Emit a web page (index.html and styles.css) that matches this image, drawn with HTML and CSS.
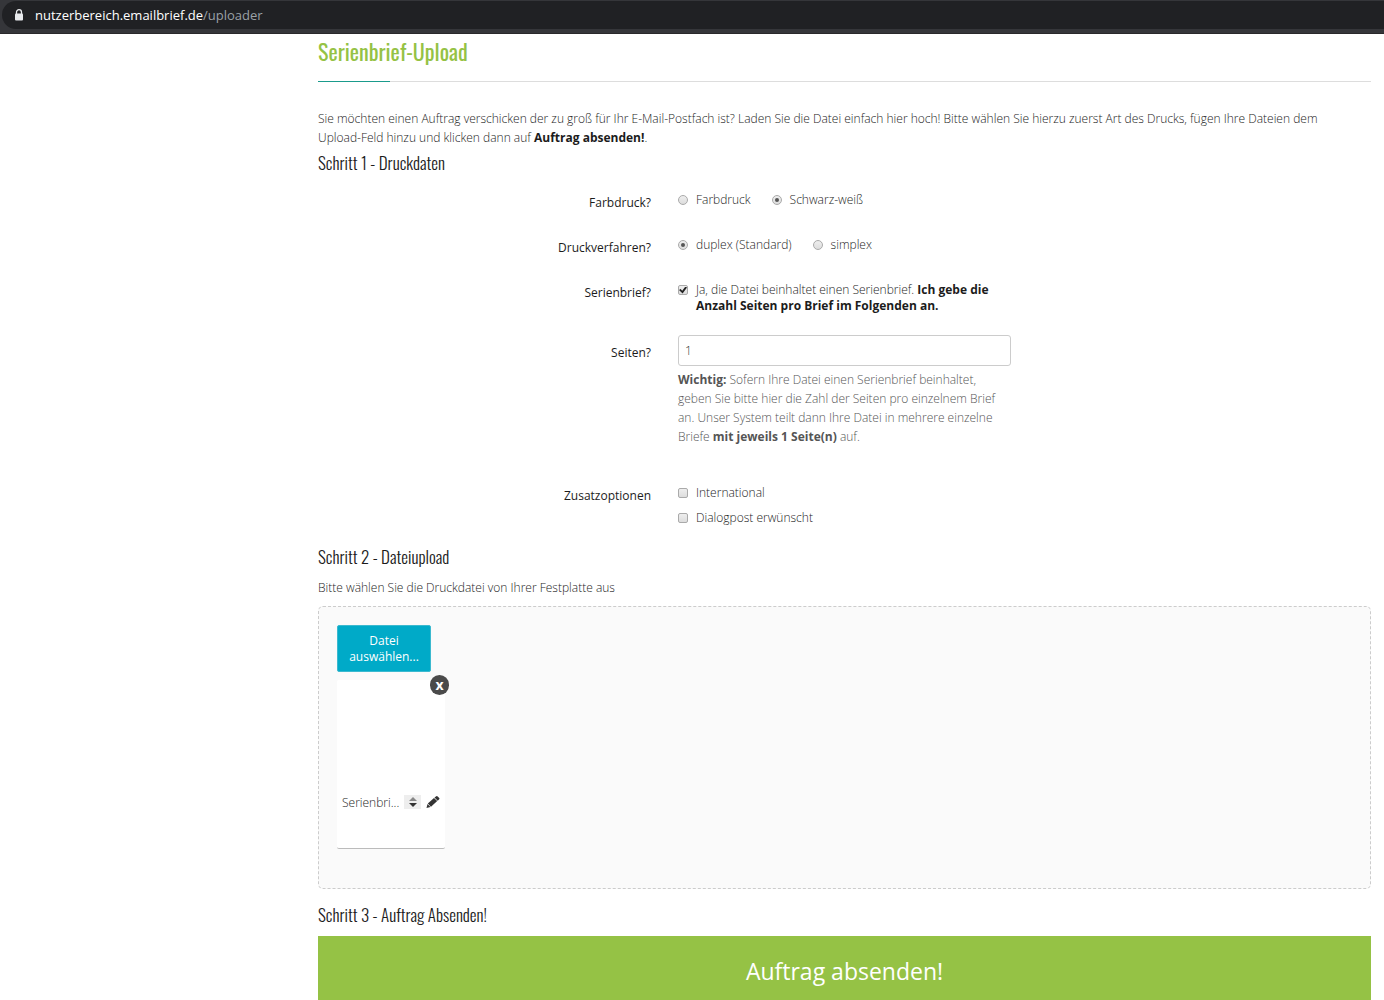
FILE: index.html
```html
<!DOCTYPE html>
<html lang="de">
<head>
<meta charset="utf-8">
<meta name="viewport" content="width=device-width, initial-scale=1">
<title>Serienbrief-Upload</title>
<link rel="stylesheet" href="styles.css">
</head>
<body>
<header class="browser-bar">
  <div class="address">
    <svg class="lock" width="10" height="12" viewBox="0 0 10 12" aria-hidden="true"><path d="M2.5 5V3.2a2.5 2.5 0 0 1 5 0V5" fill="none" stroke="#e8eaed" stroke-width="1.3"/><rect x="1" y="4.5" width="8" height="7" rx="1" fill="#e8eaed"/></svg>
    <span class="host">nutzerbereich.emailbrief.de<span class="path">/uploader</span></span>
  </div>
</header>
<main class="content">
  <h1 class="title">Serienbrief-Upload</h1>
  <p class="intro">Sie möchten einen Auftrag verschicken der zu groß für Ihr E-Mail-Postfach ist? Laden Sie die Datei einfach hier hoch! Bitte wählen Sie hierzu zuerst Art des Drucks, fügen Ihre Dateien dem <span class="nowrap">Upload-Feld</span> hinzu und klicken dann auf <b>Auftrag absenden!</b>.</p>
  <form class="form">
    <h2 class="step">Schritt 1 - Druckdaten</h2>
    <div class="row" role="radiogroup" aria-labelledby="l-farbe">
      <span class="label" id="l-farbe">Farbdruck?</span>
      <div class="options">
        <label class="option"><input class="tick radio" type="radio" name="farbe">Farbdruck</label>
        <label class="option"><input class="tick radio" type="radio" name="farbe" checked>Schwarz-weiß</label>
      </div>
    </div>
    <div class="row" role="radiogroup" aria-labelledby="l-verfahren">
      <span class="label" id="l-verfahren">Druckverfahren?</span>
      <div class="options">
        <label class="option"><input class="tick radio" type="radio" name="verfahren" checked>duplex (Standard)</label>
        <label class="option"><input class="tick radio" type="radio" name="verfahren">simplex</label>
      </div>
    </div>
    <div class="row">
      <span class="label">Serienbrief?</span>
      <label class="option"><input class="tick check" type="checkbox" checked><span>Ja, die Datei beinhaltet einen Serienbrief. <b>Ich gebe die Anzahl Seiten pro Brief im Folgenden an.</b></span></label>
    </div>
    <div class="row row-pages">
      <label class="label" for="seiten">Seiten?</label>
      <div>
        <input class="text" id="seiten" type="text" value="1">
        <p class="help"><b>Wichtig:</b> Sofern Ihre Datei einen Serienbrief beinhaltet, geben Sie bitte hier die Zahl der Seiten pro einzelnem Brief an. Unser System teilt dann Ihre Datei in mehrere einzelne Briefe <b>mit jeweils 1 Seite(n)</b> auf.</p>
      </div>
    </div>
    <div class="row row-extras" role="group" aria-labelledby="l-extras">
      <span class="label" id="l-extras">Zusatzoptionen</span>
      <div class="stack">
        <label class="option"><input class="tick check" type="checkbox">International</label>
        <label class="option"><input class="tick check" type="checkbox">Dialogpost erwünscht</label>
      </div>
    </div>
    <h2 class="step">Schritt 2 - Dateiupload</h2>
    <p class="hint">Bitte wählen Sie die Druckdatei von Ihrer Festplatte aus</p>
    <section class="dropzone">
      <button class="choose" type="button">Datei<br>auswählen...</button>
      <div class="file">
        <button class="remove" type="button" aria-label="Entfernen">x</button>
        <span class="name">Serienbri...</span>
        <button class="sort" type="button" aria-label="Reihenfolge"><svg width="8" height="10" viewBox="0 0 8 10"><path d="M0 4l4-4 4 4z" fill="#888"/><path d="M0 6h8L4 10z" fill="#333"/></svg></button>
        <button class="edit" type="button" aria-label="Bearbeiten"><svg width="14" height="13" viewBox="0 0 14 13"><path d="M.5 12l1-4 3 3z" fill="#333"/><path d="M1.800 7.500L8 1.900l3.200 3.200-6.200 5.600z" fill="#333"/><path d="M8.500 1.500L10.300.2q.7-.4 1.400.2l1.500 1.500q.6.700 0 1.300L11.700 4.700z" fill="#333"/></svg></button>
      </div>
    </section>
    <h2 class="step">Schritt 3 - Auftrag Absenden!</h2>
    <button class="submit" type="submit">Auftrag absenden!</button>
  </form>
</main>
</body>
</html>
```

FILE: styles.css
```css
* { box-sizing: border-box; }

body {
  margin: 0;
  background: #fff;
  color: #1c1c1c;
  font: 300 12px/19px "Open Sans", sans-serif;
}

h1, h2, p { margin: 0; }
b { font-weight: 700; }
button { border: 0; padding: 0; font: inherit; cursor: pointer; }
.nowrap { white-space: nowrap; }

.browser-bar {
  height: 34px;
  padding: 1px 0 4px 2px;
  background: #35363a;
  border-bottom: 1px solid #29282b;
}
.address {
  display: flex;
  align-items: center;
  gap: 11px;
  height: 28px;
  padding-left: 12px;
  border-radius: 14px 0 0 14px;
  background: #202124;
}
.host { color: #fff; font-size: 13px; font-weight: 400; }
.path { color: #9aa0a6; }

.content { padding: 0 13px 0 318px; }

.title {
  position: relative;
  height: 48px;
  border-bottom: 1px solid #ddd;
  color: #95c245;
  font: 400 22px/35px Oswald, "Liberation Sans Narrow", "Open Sans", sans-serif;
}
.title::after {
  content: "";
  position: absolute;
  left: 0;
  bottom: -1px;
  width: 72px;
  height: 1px;
  background: #1a9b8c;
}

.intro { margin-top: 27px; }

.step {
  font: 300 17px/24px Oswald, "Liberation Sans Narrow", "Open Sans", sans-serif;
  padding: 4px 0;
}

.row {
  display: grid;
  grid-template-columns: repeat(3, 1fr);
  column-gap: 27px;
  align-items: start;
  min-height: 45px;
  padding-top: 13px;
}
.label { padding-top: 1px; text-align: right; font-weight: 400; }
.options { display: flex; gap: 21px; }
.option { display: flex; gap: 8px; line-height: 16px; }
.stack { display: grid; gap: 9px; }

.tick {
  flex: none;
  appearance: none;
  display: grid;
  place-content: center;
  width: 10px;
  height: 10px;
  margin: 3px 0;
  border: 1px solid #aaa;
  background: linear-gradient(#eee, #ddd);
}
.radio { border-radius: 50%; }
.radio:checked::before {
  content: "";
  width: 4px;
  height: 4px;
  border-radius: 50%;
  background: #555;
}
.check { border-radius: 2px; }
.check:checked::before {
  content: "";
  width: 8px;
  height: 7px;
  background: #222;
  clip-path: polygon(0 50%, 20% 35%, 40% 60%, 80% 0, 100% 15%, 45% 100%);
}

.text {
  display: block;
  width: 100%;
  height: 31px;
  padding: 0 6px;
  border: 1px solid #ccc;
  border-radius: 3px;
  color: #333;
  font: inherit;
}
.help { margin-top: 4px; color: #555; }
.row-pages { padding-top: 21px; }
.row-pages .label { padding-top: 8px; }
.row-extras { margin: 26px 0 15px; }

.hint { margin-top: 5px; }

.dropzone {
  min-height: 283px;
  margin: 9px 0 10px;
  padding: 18px;
  border: 1px dashed #ccc;
  border-radius: 5px;
  background: #fafafa;
}
.choose {
  display: block;
  width: 94px;
  height: 47px;
  border: 1px solid #3bb9cf;
  border-radius: 2px;
  background: #00aac8;
  color: #fff;
  font-weight: 400;
  line-height: 16px;
}
.file {
  position: relative;
  display: flex;
  align-items: center;
  width: 108px;
  height: 169px;
  margin-top: 8px;
  padding: 76px 5px 0;
  border-bottom: 1px solid #bbb;
  border-radius: 2px;
  background: #fff;
}
.remove {
  position: absolute;
  top: -5px;
  right: -4px;
  width: 19px;
  height: 20px;
  border-radius: 10px;
  background: #4a4a4a;
  color: #fff;
  font-size: 14px;
  font-weight: 700;
  line-height: 20px;
}
.name { flex: 1; white-space: nowrap; }
.sort, .edit { display: grid; place-content: center; }
.sort { width: 17px; height: 14px; margin-right: 5px; background: #eee; }
.edit { background: none; }

.submit {
  display: block;
  width: 100%;
  height: 64px;
  margin-top: 5px;
  padding-top: 6px;
  background: #95c245;
  color: #fff;
  font-size: 23px;
  font-weight: 400;
}
```
